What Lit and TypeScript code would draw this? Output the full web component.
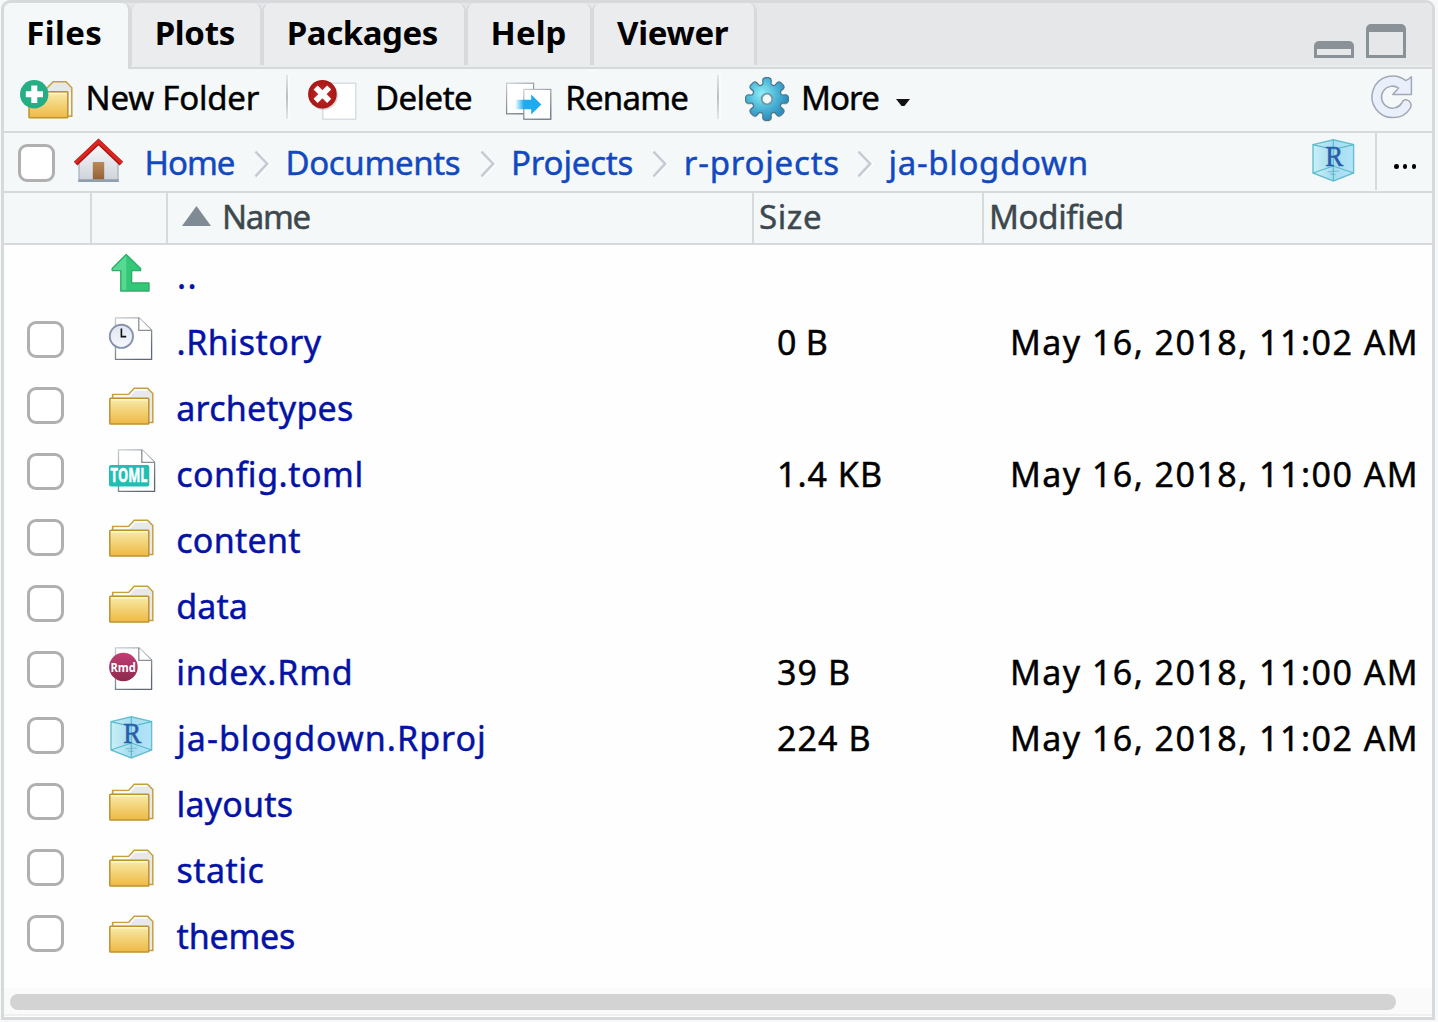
import { LitElement, html, css, svg, nothing } from "lit";
import { customElement } from "lit/decorators.js";
import { styleMap } from "lit/directives/style-map.js";

/** A run of text: `pad` is the space before it, `track` its letter spacing. */
const label = (text: string, pad: number, track: number) =>
  html`<span class="label" style=${styleMap({ paddingLeft: `${pad}px`, letterSpacing: `${track}px` })}>${text}</span>`;

const gearPath = () => {
  const n = 8;
  const pts: string[] = [];
  const p = (r: number, a: number) => `${(24 + r * Math.sin(a)).toFixed(2)} ${(30 - r * Math.cos(a)).toFixed(2)}`;
  for (let i = 0; i < n; i++) {
    const a = (i * 2 * Math.PI) / n;
    pts.push(`${i ? "L" : "M"}${p(15.6, a - 0.26)}`);
    pts.push(`L${p(19.5, a - 0.22)} Q${p(21.4, a - 0.19)} ${p(21.5, a - 0.08)} L${p(21.5, a + 0.08)} Q${p(21.4, a + 0.19)} ${p(19.5, a + 0.22)}`);
    pts.push(`L${p(15.6, a + 0.26)} Q${p(14.2, a + Math.PI / 8)} ${p(15.6, a + (2 * Math.PI) / n - 0.26)}`);
  }
  return pts.join(" ") + "Z";
};

const folderIcon = html`<svg class="file-icon" viewBox="108 0 50 66">
  <defs><linearGradient id="g" x1="0" y1="0" x2="0" y2="1"><stop offset="0" stop-color="#f7ecaa"/><stop offset="1" stop-color="#efb844"/></linearGradient></defs>
  <path d="M112.6 22V17.4H128.6L134.2 11.2H147.6L152.8 16.6V45.6H147" fill="#e6e8e9" stroke="#c6a03f" stroke-width="1.5"/>
  <path d="M114 19H129.5L135 12.9H146.8" fill="none" stroke="#fff" stroke-width="1.5"/>
  <rect x="109.8" y="21.2" width="39" height="25.8" rx="0.8" fill="url(#g)" stroke="#bd932f" stroke-width="1.5"/>
  <path d="M111 22.8H147.5" stroke="#fff8d0" stroke-width="1.4"/>
</svg>`;

const page = (dx: number) => svg`
  <defs><linearGradient id="p" x1="0" y1="0" x2="0.4" y2="1"><stop offset="0" stop-color="#cfcfcf"/><stop offset="1" stop-color="#777b80"/></linearGradient></defs>
  <path transform="translate(${dx} 0)" d="M115.5 6.8H139L151.6 19.2V48.3H115.5Z" fill="#fff" stroke="url(#p)" stroke-width="1.3"/>
  <path transform="translate(${dx} 0)" d="M138.8 6.8V19.4H151.6" fill="#fff" stroke="#8b8f93" stroke-width="1.3"/>`;

const historyIcon = html`<svg class="file-icon" viewBox="108 0 50 66">${page(0)}
  <defs><linearGradient id="c" x1="0" y1="0" x2="0" y2="1"><stop offset="0" stop-color="#dfe5ef"/><stop offset="1" stop-color="#f6f9fd"/></linearGradient></defs>
  <circle cx="121.4" cy="25.3" r="11.6" fill="url(#c)" stroke="#8793aa" stroke-width="1.9"/>
  <path d="M121.4 17.6V25.6H126.2" fill="none" stroke="#111" stroke-width="1.6"/>
</svg>`;

const tomlIcon = html`<svg class="file-icon" viewBox="108 0 50 66">${page(3)}
  <rect x="109" y="22" width="40.3" height="21.4" rx="2" fill="#20bfb4"/>
  <text x="110.6" y="39.4" class="badge heavy" font-size="19" textLength="37" lengthAdjust="spacingAndGlyphs">TOML</text>
</svg>`;

const rmdIcon = html`<svg class="file-icon" viewBox="108 0 50 66">${page(0)}
  <defs><linearGradient id="m" x1="0" y1="0" x2="0" y2="1"><stop offset="0" stop-color="#c23e74"/><stop offset="1" stop-color="#8c2a4c"/></linearGradient></defs>
  <circle cx="123.4" cy="26" r="14.3" fill="url(#m)"/>
  <text x="110.4" y="30.5" class="badge" font-size="13" textLength="25.4" lengthAdjust="spacingAndGlyphs">Rmd</text>
</svg>`;

const projectArt = svg`
  <defs><linearGradient id="r" x1="0" y1="0" x2="1" y2="0"><stop offset="0" stop-color="#c9eff6"/><stop offset="0.5" stop-color="#a5dcf0"/><stop offset="1" stop-color="#b4e4fa"/></linearGradient></defs>
  <path d="M1 5.6L21.3 0.8L41.6 5.6V34L21.3 42L1 34Z" fill="url(#r)" stroke="#66bfce" stroke-width="1.4"/>
  <path d="M1 5.6L21.3 10.5L41.6 5.6M1 34L21.3 27L41.6 34M21.3 0.8V42" fill="none" stroke="#55bac6" stroke-width="1.1"/>
  <path d="M15.5 32.8L27 32M18 35L23.5 35.5" stroke="#5aa5c0" stroke-width="1" opacity=".6"/>
  <text x="13.3" y="27" class="letter" textLength="18" lengthAdjust="spacingAndGlyphs">R</text>`;

const projectIcon = html`<svg class="file-icon" viewBox="108 0 50 66"><g transform="translate(110 9)">${projectArt}</g></svg>`;

const upIcon = html`<svg class="file-icon" viewBox="108 0 50 66">
  <path d="M126.2 9.6L140.6 23.6V25.6H131.6V38H149V46H120.8V25.6H112.2V23.6Z" fill="#33c877"/>
  <path d="M126.2 9.6V46H120.8V25.6H112.2V23.6Z" fill="#58d993"/>
  <path d="M126.2 9.6L140.6 23.6V25.6H131.6V38H149V46H120.8V25.6H112.2V23.6Z" fill="none" stroke="#2fae6b" stroke-width="1.4" stroke-linejoin="round"/>
</svg>`;

const newFolderIcon = html`<svg width="56" height="62" viewBox="18 69 56 62">
  <defs><linearGradient id="g" x1="0" y1="0" x2="0" y2="1"><stop offset="0" stop-color="#f7ecaa"/><stop offset="1" stop-color="#efb844"/></linearGradient></defs>
  <path d="M46 92V89L53.2 81.8H66L71.8 87.8V116.3H66" fill="#e6e8e9" stroke="#c6a03f" stroke-width="1.5"/>
  <path d="M69.8 92V114.5" stroke="#fff" stroke-width="1.3"/>
  <rect x="29" y="91.8" width="38.8" height="26" rx="0.8" fill="url(#g)" stroke="#bd932f" stroke-width="1.5"/>
  <path d="M30.5 93.6H66.5" stroke="#fff8d0" stroke-width="1.3"/>
  <circle cx="34.2" cy="94.2" r="14.2" fill="#25ad85"/>
  <path d="M25.8 94.3H43M34.3 85.6V103" stroke="#fff" stroke-width="6"/>
</svg>`;

const deleteIcon = html`<svg width="50" height="62" viewBox="307 69 50 62">
  <defs><radialGradient id="d"><stop offset="0" stop-color="#c22a26"/><stop offset="1" stop-color="#a71817"/></radialGradient></defs>
  <rect x="322.8" y="83.2" width="33" height="36" fill="#fff" stroke="#d3dade" stroke-width="1.3"/>
  <circle cx="323.6" cy="95.6" r="14.4" fill="#000" opacity=".15"/>
  <circle cx="322.4" cy="94.2" r="14.3" fill="url(#d)"/>
  <path d="M315.6 87.5L329.2 100.9M329.2 87.5L315.6 100.9" stroke="#fff" stroke-width="5.8"/>
</svg>`;

const renameIcon = html`<svg width="48" height="62" viewBox="505 69 48 62">
  <defs><linearGradient id="p" x1="0" y1="0" x2="0.6" y2="1"><stop offset="0" stop-color="#c9cdd2"/><stop offset="1" stop-color="#5f6772"/></linearGradient>
  <linearGradient id="a" gradientUnits="userSpaceOnUse" x1="515" y1="0" x2="524" y2="0"><stop offset="0" stop-color="#1fabee" stop-opacity="0"/><stop offset="1" stop-color="#1fabee"/></linearGradient></defs>
  <rect x="506.6" y="83.2" width="27" height="30.6" fill="#fff" stroke="url(#p)" stroke-width="1.2"/>
  <rect x="523.8" y="89.4" width="27" height="29.8" fill="#fff" stroke="url(#p)" stroke-width="1.2"/>
  <path d="M515 99.8H531.2V94.4L541.3 104.5L531.2 114.6V109.2H515Z" fill="url(#a)"/>
</svg>`;

const gearIcon = html`<svg width="50" height="62" viewBox="0 0 50 62">
  <defs><radialGradient id="t" cx=".38" cy=".38" r=".6"><stop offset="0" stop-color="#8df0f8"/><stop offset=".55" stop-color="#4fb9d8"/><stop offset="1" stop-color="#2f8fc0"/></radialGradient></defs>
  <path d=${gearPath()} transform="translate(0 1.4)" fill="#000" opacity=".15"/>
  <path d=${gearPath()} fill="url(#t)" stroke="#45788f" stroke-width="1.2"/>
  <circle cx="24" cy="30" r="5.3" fill="#f4f8f9" stroke="#6f98a5" stroke-width="1.8"/>
</svg>`;

const refreshIcon = html`<svg width="46" height="62" viewBox="1369 69 46 62">
  <path d="M1405.8 80.6Q1409.5 79 1411.4 76.8V94.6H1392.8L1398.6 88A11 11 0 1 0 1401.8 103C1403 99.2 1406.5 98.8 1409 101C1411.4 103.3 1411.4 106.3 1409.8 108.8C1406 114.8 1400 117.6 1393 117.6A20.8 20.8 0 1 1 1405.8 80.6Z" fill="#e9f0fb" stroke="#a3a9b4" stroke-width="1.5" stroke-linejoin="round"/>
</svg>`;

const homeIcon = html`<svg width="52" height="58" viewBox="73 133 52 58">
  <defs><linearGradient id="w" x1="0" y1="0" x2="0" y2="1"><stop offset="0" stop-color="#fafafc"/><stop offset="1" stop-color="#cdd2da"/></linearGradient>
  <linearGradient id="o" x1="0" y1="0" x2="0" y2="1"><stop offset="0" stop-color="#bb8856"/><stop offset="1" stop-color="#936239"/></linearGradient></defs>
  <path d="M79 181V161.5L98.5 143L118 161.5V181Z" fill="url(#w)" stroke="#a9b3bd" stroke-width="1.3"/>
  <path d="M78.4 180.6H118.7" stroke="#909fab" stroke-width="2.6"/>
  <rect x="92.8" y="162" width="11.4" height="17.3" fill="url(#o)"/>
  <path d="M75.6 163.6L98.5 142L121.4 163.6" fill="none" stroke="#a81613" stroke-width="5"/>
  <path d="M75.6 162.8L98.5 141.4L121.4 162.8" fill="none" stroke="#de2520" stroke-width="3.2"/>
</svg>`;

const chevron = html`<svg class="chevron" width="18" height="58" viewBox="0 0 18 58">
  <path d="M4 19.5L16.4 31L4 43.7" fill="none" stroke="#fff" stroke-width="2"/>
  <path d="M2.5 18.7L14.2 30.7L2.5 43.4" fill="none" stroke="#c6ccd4" stroke-width="2.6"/></svg>`;

type Row = { name: string; pad: number; track: number; icon: unknown; size?: [string, number, number]; modified?: string };

const rows: Row[] = [
  { name: "..", pad: 9, track: 1.5, icon: upIcon },
  { name: ".Rhistory", pad: 8.6, track: 0.5, icon: historyIcon, size: ["0 B", 23, 0.2], modified: "May 16, 2018, 11:02 AM" },
  { name: "archetypes", pad: 8.3, track: 0.22, icon: folderIcon },
  { name: "config.toml", pad: 8.2, track: 0.52, icon: tomlIcon, size: ["1.4 KB", 23, 1], modified: "May 16, 2018, 11:00 AM" },
  { name: "content", pad: 8.3, track: 0.25, icon: folderIcon },
  { name: "data", pad: 8.3, track: 0.1, icon: folderIcon },
  { name: "index.Rmd", pad: 8.3, track: 0.78, icon: rmdIcon, size: ["39 B", 23, 1.09], modified: "May 16, 2018, 11:00 AM" },
  { name: "ja-blogdown.Rproj", pad: 9, track: 1.03, icon: projectIcon, size: ["224 B", 23, 1.1], modified: "May 16, 2018, 11:02 AM" },
  { name: "layouts", pad: 8.4, track: 0.24, icon: folderIcon },
  { name: "static", pad: 8.4, track: 0.5, icon: folderIcon },
  { name: "themes", pad: 8.6, track: -0.19, icon: folderIcon },
];

@customElement("app-root")
export class AppRoot extends LitElement {
  static styles = css`
    :host { display: block; box-sizing: border-box; height: 1022px; padding: 0 3px 2px 1px; background: #f6f8fa; overflow: hidden;
      font-family: "Noto Sans", "Open Sans", sans-serif; font-size: 33px; color: #000; }
    * { box-sizing: border-box; }
    svg { display: block; flex: none; overflow: visible; }
    .pane { height: 1020px; border: 3px solid #d6dadc; border-radius: 9px 9px 0 0; background: #fefefe; overflow: hidden; display: flex; flex-direction: column; }
    .label { display: block; white-space: pre; -webkit-text-stroke: 0.45px currentColor; }
    .tabs { height: 66px; flex: none; display: flex; background: linear-gradient(#e6e7e9 62px, #eaebed 62px, #eaebed 64px, #d6dadc 64px); font-weight: 700; line-height: 60px; }
    .tabs .label { -webkit-text-stroke: 0; }
    .tab { height: 62px; background: #ebecee; border: solid #d6dadc; border-width: 0 2px; border-radius: 8px 8px 0 0; }
    .tab.active { height: 66px; background: #f4f8f9; border-width: 0 3px 0 0; }
    .t0 { width: 127px; } .t1 { width: 131px; } .t2 { width: 204px; } .t3 { width: 126px; } .t4 { width: 165px; }
    .t1 { border-left-width: 1px; border-right-width: 2px; } .t4 { border-right-width: 3px; }
    .grow { flex: 1; }
    .winbtn { width: 40px; border: 3px solid #8a9297; border-top-width: 8px; border-radius: 5px 5px 0 0; margin-right: 12px; }
    .min { height: 17px; margin-top: 38px; } .max { height: 34px; margin-top: 21px; margin-right: 26px; }
    .toolbar { height: 64px; flex: none; background: #f4f8f9; border-bottom: 2px solid #d6dadc; line-height: 58px; padding-left: 14px; padding-right: 17px; display: grid; grid-template-columns: 66px 202px 21px 68px 130px 60px 152px 26px 56px 96px 1fr 46px; }
    .sep { width: 2px; height: 44px; margin-top: 6px; background: linear-gradient(#e3e7e9, #bbbfc2 50%, #e3e7e9); box-shadow: 2px 0 0 #fafcfc; }
    .caret { width: 14px; height: 7px; margin: 30px 0 0 1px; background: #111; clip-path: polygon(0 0, 100% 0, 60% 100%, 40% 100%); }
    .path { height: 60px; flex: none; background: #f4f8f9; border-bottom: 2px solid #d6dadc; line-height: 59px; color: #1249c0; display: grid; grid-template-columns: 69px 71px 109px 31px 195px 30px 142px 31px 174px 30px 1fr 63px 2px 55px; }
    .check { width: 37px; height: 37px; border: 3px solid #b0b0b0; border-radius: 9px; background: #fff; }
    .path .check { margin: 11px 0 0 14px; height: 38px; }
    .rule { width: 2px; height: 57px; background: #d6dadc; }
    .dots { display: flex; gap: 4.3px; padding: 31px 0 0 17px; }
    .dot { width: 4.6px; height: 4.6px; border-radius: 50%; background: #000; }
    .head, .row { display: grid; grid-template-columns: 88px 76px 586px 230px 1fr; flex: none; }
    .head { height: 52px; background: #f4f8f9; border-bottom: 2px solid #d6dadc; line-height: 48px; color: #3d484e; }
    .cell { display: flex; border-right: 2px solid #d6dadc; }
    .cell:last-child { border: 0; }
    .sort { width: 29px; height: 20px; margin: 13px 0 0 14px; background: #808a95; clip-path: polygon(50% 0, 100% 100%, 0 100%); }
    .list { flex: 1; font-size: 34px; line-height: 63px; }
    .row { height: 66px; }
    .row .check { margin: 10px 0 0 23px; }
    .file-icon { width: 50px; height: 66px; margin-left: 16px; }
    .name { color: #0412a5; }
    .hscroll { height: 29px; flex: none; background: #fafafa; border-bottom: 1px solid #fff; box-shadow: inset 0 -2px 0 #f0f0f0; padding: 6px 0 0 6px; }
    .thumb { width: 1386px; height: 16px; border-radius: 8px; background: #d3d3d3; }
    .badge { font-family: "Open Sans", "Noto Sans", sans-serif; font-weight: 700; fill: #fff; }
    .heavy { stroke: #fff; stroke-width: 0.5px; }
    .letter { font-family: "Liberation Serif", serif; font-size: 29.5px; fill: #2a5cab; stroke: #2a5cab; stroke-width: 0.5px; }
  `;

  render() {
    return html`<div class="pane">
      <div class="tabs">
        <div class="tab active t0">${label("Files", 22.3, 0.37)}</div>
        <div class="tab t1">${label("Plots", 22.7, -0.32)}</div>
        <div class="tab t2">${label("Packages", 22.8, -0.44)}</div>
        <div class="tab t3">${label("Help", 22.6, 0.07)}</div>
        <div class="tab t4">${label("Viewer", 23, -0.3)}</div>
        <div class="grow"></div>
        <div class="winbtn min"></div>
        <div class="winbtn max"></div>
      </div>
      <div class="toolbar">
        ${newFolderIcon}${label("New Folder", 1.6, -0.21)}<div class="sep"></div>
        ${deleteIcon}<div>${label("Delete", 0, -0.55)}</div>
        ${renameIcon}${label("Rename", 0.3, -0.8)}<div class="sep"></div>
        <div>${gearIcon}</div>${label("More", 2, -0.9)}<div class="caret"></div>
        ${refreshIcon}
      </div>
      <div class="path">
        <div class="check"></div>${homeIcon}${label("Home", 0.6, -1.05)}
        ${chevron}${label("Documents", 1.5, -0.35)}
        ${chevron}${label("Projects", 2, -0.17)}
        ${chevron}${label("r-projects", 1.8, 0.8)}
        ${chevron}${label("ja-blogdown", 2.6, 0.68)}
        <svg width="46" height="58" viewBox="0 0 46 58"><g transform="translate(0 6)">${projectArt}</g></svg>
        <div class="rule"></div>
        <div class="dots"><div class="dot"></div><div class="dot"></div><div class="dot"></div></div>
      </div>
      <div class="head">
        <div class="cell"></div><div class="cell"></div>
        <div class="cell"><div class="sort"></div>${label("Name", 11, -1.3)}</div>
        <div class="cell">${label("Size", 5, 0.6)}</div>
        <div class="cell">${label("Modified", 5, -0.35)}</div>
      </div>
      <div class="list">
        ${rows.map((r, i) => html`<div class="row">
          <div>${i ? html`<div class="check"></div>` : nothing}</div>
          <div>${r.icon}</div>
          <div class="name">${label(r.name, r.pad, r.track)}</div>
          <div>${r.size ? label(...r.size) : nothing}</div>
          <div>${r.modified ? label(r.modified, 26, 1.46) : nothing}</div>
        </div>`)}
      </div>
      <div class="hscroll"><div class="thumb"></div></div>
    </div>`;
  }
}
